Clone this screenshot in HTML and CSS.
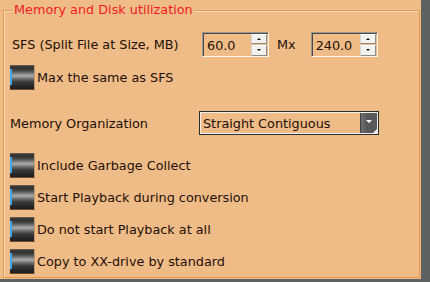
FILE: index.html
```html
<!DOCTYPE html>
<html>
<head>
<meta charset="utf-8">
<link rel="stylesheet" href="styles.css">
</head>
<body>
<div class="screen">
  <div class="panel">
    <fieldset class="group">
      <legend class="group-title">Memory and Disk utilization</legend>
      <div class="rows">
        <div class="row row-sfs">
          <span class="label label-sfs">SFS (Split File at Size, MB)</span>
          <div class="spin">
            <span class="spin-value">60.0</span>
            <span class="spin-btns"><span class="spin-btn spin-up"></span><span class="spin-btn spin-down"></span></span>
          </div>
          <span class="mx">Mx</span>
          <div class="spin">
            <span class="spin-value">240.0</span>
            <span class="spin-btns"><span class="spin-btn spin-up"></span><span class="spin-btn spin-down"></span></span>
          </div>
        </div>
        <div class="toggle row-max"><span class="toggle-icon"></span><span class="toggle-text">Max the same as SFS</span></div>
        <div class="row row-mem">
          <span class="label label-mem">Memory Organization</span>
          <div class="combo">
            <span class="combo-value">Straight Contiguous</span>
            <span class="combo-btn"></span>
          </div>
        </div>
        <div class="toggle row-first"><span class="toggle-icon"></span><span class="toggle-text">Include Garbage Collect</span></div>
        <div class="toggle row-next"><span class="toggle-icon"></span><span class="toggle-text">Start Playback during conversion</span></div>
        <div class="toggle row-next"><span class="toggle-icon"></span><span class="toggle-text">Do not start Playback at all</span></div>
        <div class="toggle row-next"><span class="toggle-icon"></span><span class="toggle-text">Copy to XX-drive by standard</span></div>
      </div>
    </fieldset>
  </div>
</div>
</body>
</html>
```

FILE: styles.css
```css
html, body {
  margin: 0;
  padding: 0;
}
body {
  background: #5e6260;
  font-family: "DejaVu Sans", "Verdana", sans-serif;
  font-size: 12.8px;
  color: #1e1006;
}
.screen {
  width: 430px;
  height: 282px;
  display: flex;
  overflow: hidden;
}
.panel {
  width: 421px;
  height: 279px;
  background: #efbc88;
  padding-top: 2px;
  box-sizing: border-box;
}
.group {
  margin: 0 0 0 3px;
  padding: 0 0 0 6px;
  width: 417px;
  height: 276px;
  box-sizing: border-box;
  border: 1px solid #e39a4f;
  box-shadow: inset 1px 1px 0 #f7dcc0;
  min-width: 0;
}
.group-title {
  color: #ee1c1c;
  line-height: 16px;
  padding: 0 2px;
  margin-left: 2px;
  background: #efbc88;
}
.rows {
  display: flex;
  flex-direction: column;
}
.row {
  display: flex;
  align-items: center;
}
.label {
  flex: none;
  padding-left: 2px;
  box-sizing: border-box;
}
.row-sfs {
  margin-top: 14px;
  height: 25px;
}
.label-sfs {
  width: 192px;
}
.spin {
  flex: none;
  width: 67px;
  height: 25px;
  box-sizing: border-box;
  display: flex;
  align-items: center;
  border: 1px solid;
  border-color: #9a958f #fcf6ee #fcf6ee #9a958f;
  box-shadow: inset 1px 1px 0 #4a4a4a;
}
.spin-value {
  flex: 1;
  padding-left: 4px;
  padding-top: 1px;
}
.spin-btns {
  flex: none;
  width: 16px;
  height: 22px;
  margin-right: 1px;
  display: flex;
  flex-direction: column;
  gap: 1px;
}
.spin-btn {
  flex: 1;
  background: #f4f2f0;
  border: 1px solid;
  border-color: #ffffff #8a8a8a #8a8a8a #d8d8d8;
  display: flex;
  align-items: center;
  justify-content: center;
}
.spin-up::before {
  content: "";
  border-left: 2px solid transparent;
  border-right: 2px solid transparent;
  border-bottom: 2px solid #111;
}
.spin-down::before {
  content: "";
  border-left: 2px solid transparent;
  border-right: 2px solid transparent;
  border-top: 2px solid #111;
}
.mx {
  margin: 0 15px 0 8px;
}
.row-mem {
  margin-top: 21px;
  height: 24px;
}
.label-mem {
  width: 189px;
  padding-left: 0;
}
.combo {
  flex: none;
  width: 180px;
  height: 24px;
  box-sizing: border-box;
  display: flex;
  align-items: center;
  border: 1px solid #24302e;
  box-shadow: inset -1px -1px 0 #f3eee8, inset 1px 1px 0 #f3eee8;
}
.combo-value {
  flex: 1;
  padding-left: 3px;
}
.combo-btn {
  flex: none;
  position: relative;
  width: 16px;
  height: 20px;
  margin-right: 1px;
  background: linear-gradient(to right, #6e6e6e, #585858 40%, #5a5a5a);
  border-left: 1px solid #404040;
}
.combo-btn::before {
  content: "";
  position: absolute;
  left: 5px;
  top: 7px;
  border-left: 3px solid transparent;
  border-right: 3px solid transparent;
  border-top: 3px solid #ffffff;
}
.combo-btn::after {
  content: "";
  position: absolute;
  right: 0;
  bottom: 0;
  border-left: 4px solid transparent;
  border-bottom: 4px solid #f4f4f4;
}
.toggle {
  display: flex;
  align-items: center;
  height: 25px;
  gap: 2px;
}
.row-max {
  margin-top: 8px;
}
.row-first {
  margin-top: 18px;
}
.row-next {
  margin-top: 7px;
}
.toggle-icon {
  flex: none;
  position: relative;
  width: 25px;
  height: 25px;
  box-sizing: border-box;
  border-right: 1px solid #c49a6a;
  border-bottom: 1px solid #6a4a28;
  background: linear-gradient(to bottom,
    #8a7a66 0, #3a3a3a 1px, #333333 4px, #5e5e5e 7px,
    #9c9c9c 10px, #a6a6a6 11px, #6a6a6a 14px, #3a3a3a 17px,
    #262626 21px, #1e1e1e 24px);
}
.toggle-icon::before {
  content: "";
  position: absolute;
  left: 0;
  top: 4px;
  bottom: 4px;
  width: 2px;
  background: #38a8ea;
}
.toggle-text {
  white-space: nowrap;
}
```
